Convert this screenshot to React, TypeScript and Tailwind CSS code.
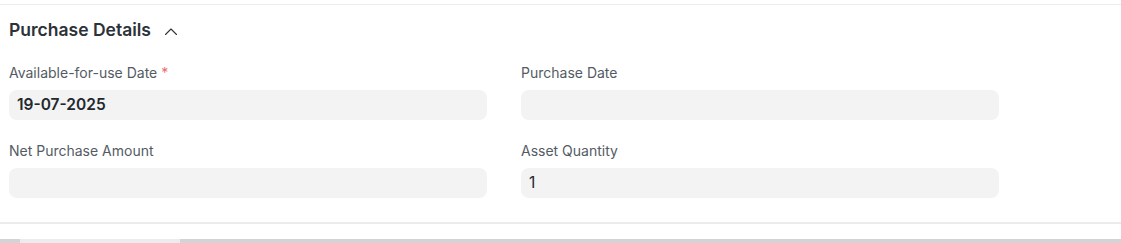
import React from 'react';

const Field: React.FC<{ label: string; value?: string; required?: boolean; bold?: boolean }> = ({
  label,
  value,
  required,
  bold,
}) => {
  return (
    <div className="flex flex-col">
      <label className="h-[18px] text-[14px] leading-[18px] text-[#545b64]">
        {label}
        {required && <span className="ml-1 text-[#e86c6c]">*</span>}
      </label>
      <div
        className={`mt-[8px] flex h-[30px] items-center rounded-lg bg-[#f3f3f3] px-2 text-[15.5px] text-[#22282e] ${
          bold ? 'font-semibold' : ''
        }`}
      >
        {value}
      </div>
    </div>
  );
};

export default function App() {
  return (
    <div className="h-[243px] w-[1121px] overflow-hidden bg-white" style={{ fontFamily: 'Inter, "Noto Sans", sans-serif' }}>
      <div className="mt-[4px] border-t border-[#ededed]">
        <div className="flex h-[50px] items-center pl-[9px]">
          <h2 className="text-[17.5px] font-semibold text-[#2c3238]">Purchase Details</h2>
          <svg className="ml-[12px] mt-[4px] h-[16px] w-[16px]" viewBox="0 0 16 16" fill="none">
            <path d="M2.5 10.5 8 5l5.5 5.5" stroke="#333" strokeWidth="1.1" strokeLinecap="round" strokeLinejoin="round" />
          </svg>
        </div>
        <div className="grid grid-cols-[478px_478px] gap-x-[34px] gap-y-[22px] pl-[9px] pt-[9px]">
          <Field label="Available-for-use Date" required value="19-07-2025" bold />
          <Field label="Purchase Date" />
          <Field label="Net Purchase Amount" />
          <Field label="Asset Quantity" value="1" />
        </div>
        <div className="mt-[24px] border-t-2 border-[#ebebeb]" />
        <div className="mt-[15px] flex h-[4px] bg-[#d4d4d4]">
          <div className="ml-[20px] w-[160px] bg-[#ececec]" />
        </div>
      </div>
    </div>
  );
}
